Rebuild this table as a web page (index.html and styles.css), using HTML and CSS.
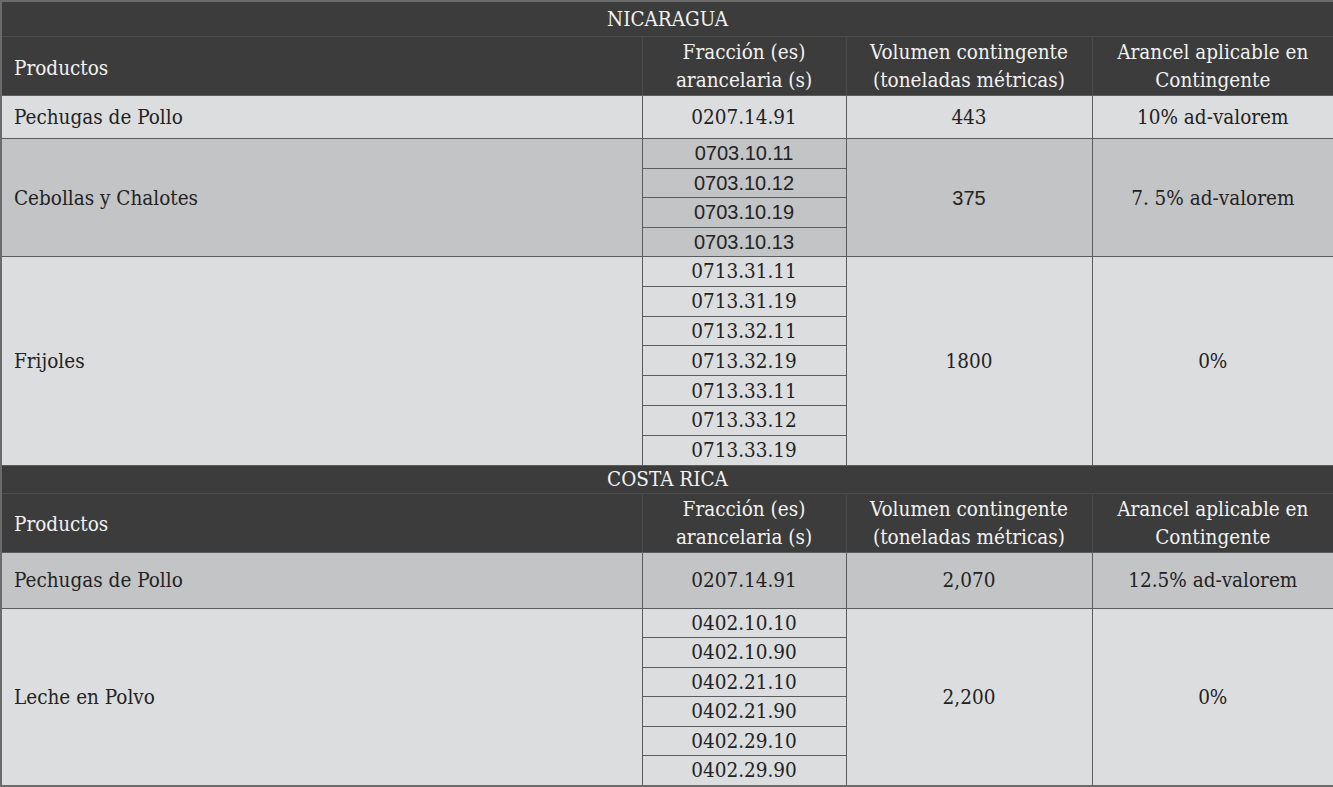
FILE: index.html
```html
<!DOCTYPE html>
<html lang="es">
<head>
<meta charset="utf-8">
<title>Contingentes</title>
<link rel="stylesheet" href="styles.css">
</head>
<body>
<table class="tbl">
  <colgroup>
    <col class="c1"><col class="c2"><col class="c3"><col class="c4">
  </colgroup>
  <tbody>
    <tr class="title first"><td colspan="4">NICARAGUA</td></tr>
    <tr class="head">
      <td class="prod">Productos</td>
      <td>Fracción (es)<br>arancelaria (s)</td>
      <td>Volumen contingente<br>(toneladas métricas)</td>
      <td>Arancel aplicable en<br>Contingente</td>
    </tr>
    <tr class="light r43">
      <td class="prod">Pechugas de Pollo</td>
      <td>0207.14.91</td>
      <td>443</td>
      <td>10% ad-valorem</td>
    </tr>
    <tr class="dark sub">
      <td class="prod" rowspan="4">Cebollas y Chalotes</td>
      <td><span class="sans">0703.10.11</span></td>
      <td rowspan="4"><span class="sans">375</span></td>
      <td rowspan="4">7. 5% ad-valorem</td>
    </tr>
    <tr class="dark sub"><td><span class="sans">0703.10.12</span></td></tr>
    <tr class="dark sub"><td><span class="sans">0703.10.19</span></td></tr>
    <tr class="dark sub"><td><span class="sans">0703.10.13</span></td></tr>
    <tr class="light sub fr">
      <td class="prod" rowspan="7">Frijoles</td>
      <td>0713.31.11</td>
      <td rowspan="7">1800</td>
      <td rowspan="7">0%</td>
    </tr>
    <tr class="light sub fr"><td>0713.31.19</td></tr>
    <tr class="light sub fr"><td>0713.32.11</td></tr>
    <tr class="light sub fr"><td>0713.32.19</td></tr>
    <tr class="light sub fr"><td>0713.33.11</td></tr>
    <tr class="light sub fr"><td>0713.33.12</td></tr>
    <tr class="light sub fr"><td>0713.33.19</td></tr>
    <tr class="title second"><td colspan="4">COSTA RICA</td></tr>
    <tr class="head">
      <td class="prod">Productos</td>
      <td>Fracción (es)<br>arancelaria (s)</td>
      <td>Volumen contingente<br>(toneladas métricas)</td>
      <td>Arancel aplicable en<br>Contingente</td>
    </tr>
    <tr class="dark r57">
      <td class="prod">Pechugas de Pollo</td>
      <td>0207.14.91</td>
      <td>2,070</td>
      <td>12.5% ad-valorem</td>
    </tr>
    <tr class="light sub">
      <td class="prod" rowspan="6">Leche en Polvo</td>
      <td>0402.10.10</td>
      <td rowspan="6">2,200</td>
      <td rowspan="6">0%</td>
    </tr>
    <tr class="light sub"><td>0402.10.90</td></tr>
    <tr class="light sub"><td>0402.21.10</td></tr>
    <tr class="light sub"><td>0402.21.90</td></tr>
    <tr class="light sub"><td>0402.29.10</td></tr>
    <tr class="light sub"><td>0402.29.90</td></tr>
  </tbody>
</table>
</body>
</html>
```

FILE: styles.css
```css
html, body {
  margin: 0;
  padding: 0;
  background: #ffffff;
}

.tbl {
  width: 1333px;
  border-collapse: collapse;
  table-layout: fixed;
  font-family: "DejaVu Serif Condensed", "DejaVu Serif", serif;
  font-stretch: condensed;
  font-size: 20.5px;
  color: #232323;
  border: 2px solid #6b6b6b;
}

.c1 { width: 641px; }
.c2 { width: 204px; }
.c3 { width: 246px; }
.c4 { width: 242px; }

.tbl td {
  border: 1px solid #5c5c5c;
  text-align: center;
  vertical-align: middle;
  padding: 0 4px;
  line-height: 24px;
  white-space: nowrap;
  overflow: hidden;
}

.tbl td.prod {
  text-align: left;
  padding-left: 12px;
}

.title td {
  background: #3c3c3c;
  color: #f2f2f2;
  border-color: #3c3c3c;
  border-bottom: 1px solid #4c4c4c;
}

.first td { height: 34px; }
.second td { height: 27px; line-height: 22px; }

.head td {
  background: #3c3c3c;
  color: #f2f2f2;
  height: 55px;
  border-top-color: #4c4c4c;
  border-left-color: #4a4a4a;
  border-right-color: #4a4a4a;
  border-bottom-color: #5c5c5c;
  line-height: 28px;
}

.head td.prod { padding-top: 3px; }

.light td { background: #dcdddf; }
.dark td { background: #c3c4c6; }

.r43 td { height: 42px; }
.r57 td { height: 55px; }

.sub td { height: 28.5px; line-height: 26px; }
.fr td { height: 28.8px; }

.sans {
  font-family: "Liberation Sans", Arial, sans-serif;
  font-stretch: normal;
  font-size: 20px;
}
```
